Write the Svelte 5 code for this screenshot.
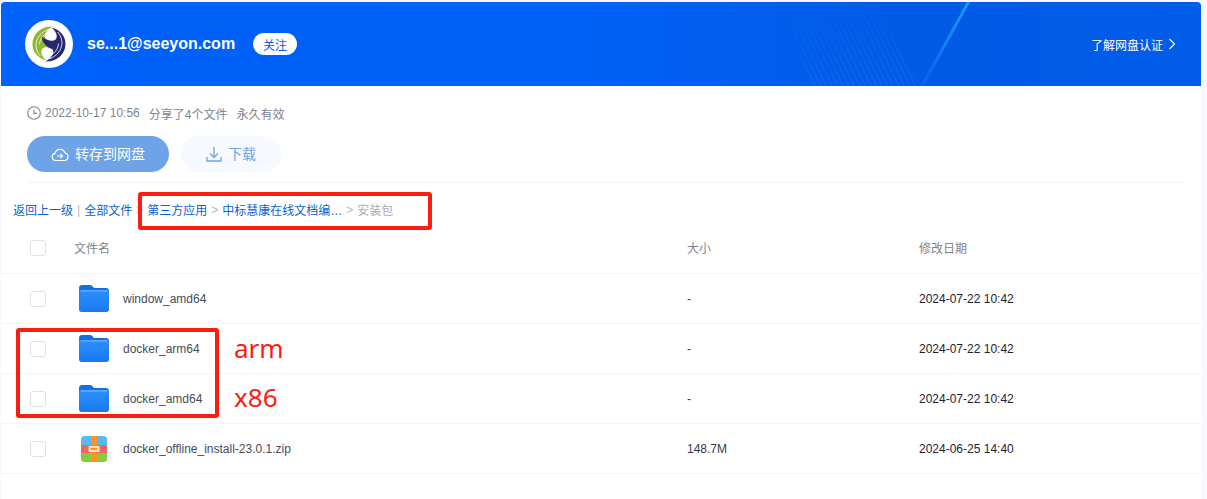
<script>
  const files = [
    { name: "window_amd64", type: "folder", size: "-", date: "2024-07-22 10:42" },
    { name: "docker_arm64", type: "folder", size: "-", date: "2024-07-22 10:42" },
    { name: "docker_amd64", type: "folder", size: "-", date: "2024-07-22 10:42" },
    { name: "docker_offline_install-23.0.1.zip", type: "zip", size: "148.7M", date: "2024-06-25 14:40" },
  ];
</script>

{#snippet swirl(fill)}
  <path d="M24 2.500C12 2 3.500 10 3.500 20c0 8 5 14 14 16.500C13 33 11 28 13 25c2-3 9-2 14 2 0-6-5-10-10-12-3-2-1-8 7-13z" fill={fill} />
  <path d="M20 5C12 8 7.500 13.500 7 21c0 4 1.500 8 4.500 11M21 7.500c-6 2.500-10 6.500-10.500 13" fill="none" stroke="#fff" stroke-width="0.800" />
{/snippet}

<div class="page">
  <div class="card">
    <header class="banner">
      <svg class="streak" width="280" height="84" viewBox="0 0 280 84">
        <defs>
          <pattern id="hatch" width="5" height="5" patternUnits="userSpaceOnUse" patternTransform="rotate(-26)">
            <rect width="2" height="5" fill="#2a84f5" />
          </pattern>
          <linearGradient id="fade" x1="0" y1="0" x2="0.4" y2="1">
            <stop offset="0" stop-color="#fff" stop-opacity="0" />
            <stop offset="1" stop-color="#fff" stop-opacity="0.22" />
          </linearGradient>
          <mask id="fademask"><rect width="280" height="84" fill="url(#fade)" /></mask>
          <linearGradient id="line" x1="1" y1="0" x2="0" y2="1">
            <stop offset="0" stop-color="#1ba0f8" />
            <stop offset="1" stop-color="#0a5cf0" />
          </linearGradient>
        </defs>
        <polygon points="80,0 176,0 220,84 110,84" fill="url(#hatch)" mask="url(#fademask)" />
        <polygon points="219,84 266,0 269,0 223,84" fill="url(#line)" />
      </svg>
      <div class="avatar">
        <svg width="40" height="40" viewBox="0 0 40 40">
          {@render swirl("#8fb82e")}
          <g transform="rotate(180 20 20)">
            {@render swirl("#26286f")}
          </g>
        </svg>
      </div>
      <span class="user">se...1@seeyon.com</span>
      <button class="follow">关注</button>
      <a class="verify" href="#verify">了解网盘认证
        <svg width="8" height="12" viewBox="0 0 8 12"><path d="M1.500 1l5 5-5 5" fill="none" stroke="#fff" stroke-width="1.100" /></svg>
      </a>
    </header>

    <section class="info">
      <div class="meta">
        <svg width="14" height="14" viewBox="0 0 14 14"><circle cx="7" cy="7" r="6.300" fill="none" stroke="#7d8290" stroke-width="1.100" /><path d="M7 3.400V7.400h3" fill="none" stroke="#7d8290" stroke-width="1.100" /></svg>
        <span class="time">2022-10-17 10:56</span>
        <span>分享了4个文件</span>
        <span>永久有效</span>
      </div>
      <div class="actions">
        <button class="save">
          <svg width="18" height="16" viewBox="0 0 18 16"><path d="M5 14.500H4.500A3.600 3.600 0 0 1 4 7.400 5.200 5.200 0 0 1 14 7a3.800 3.800 0 0 1-.5 7.500z" fill="none" stroke="#fff" stroke-width="1.200" /><path d="M6 10h5.500M9.500 8l2 2-2 2" fill="none" stroke="#fff" stroke-width="1.200" /></svg>
          <span>转存到网盘</span>
        </button>
        <button class="download">
          <svg width="16" height="16" viewBox="0 0 16 16"><path d="M8 1v10M4 7.500l4 4 4-4M1 11v4h14v-4" fill="none" stroke="#6ea3e8" stroke-width="1.300" /></svg>
          <span>下载</span>
        </button>
      </div>
    </section>

    <nav class="crumbs">
      <a href="#up">返回上一级</a><i class="bar">|</i><a href="#all">全部文件</a><i class="sep">&gt;</i>
      <a href="#third">第三方应用</a><i class="sep">&gt;</i>
      <a href="#zb">中标慧康在线文档编…</a><i class="sep">&gt;</i>
      <span class="here">安装包</span>
    </nav>

    <div class="row head">
      <span class="check"></span>
      <span class="name-col">文件名</span>
      <span class="size-col">大小</span>
      <span class="date-col">修改日期</span>
    </div>

    {#each files as file}
      <div class="row">
        <span class="check"></span>
        <span class="name-col">
          <span class="icon">
            {#if file.type === "folder"}
              <svg width="30" height="27" viewBox="0 0 31 28">
                <defs>
                  <linearGradient id="front" x1="0" y1="0" x2="0" y2="1">
                    <stop offset="0" stop-color="#2c8ffc" />
                    <stop offset="1" stop-color="#1a78f2" />
                  </linearGradient>
                </defs>
                <path d="M3 0h8c1.500 0 2.500.6 3.300 1.700L15.500 3H28c1.700 0 3 1.300 3 3v19c0 1.700-1.300 3-3 3H3c-1.700 0-3-1.300-3-3V3c0-1.700 1.300-3 3-3z" fill="#126fe6" />
                <path d="M2.500 5.500h26c1.300 0 2.500 1 2.500 2.500v17c0 1.700-1.300 3-3 3H3c-1.700 0-3-1.300-3-3V8c0-1.500 1.200-2.500 2.500-2.500z" fill="url(#front)" />
                <rect x="1.500" y="5.500" width="28" height="1.200" fill="#8cc2ff" opacity="0.8" />
              </svg>
            {:else}
              <svg width="26" height="26" viewBox="0 0 26 26">
                <defs><clipPath id="zipclip"><rect width="26" height="26" rx="3.500" /></clipPath></defs>
                <g clip-path="url(#zipclip)">
                  <rect width="26" height="9" fill="#5cb7f7" />
                  <rect y="9" width="26" height="8" fill="#ef6464" />
                  <rect y="17" width="26" height="9" fill="#84cc3c" />
                  <rect x="10" width="6" height="26" fill="#ff9326" />
                </g>
                <rect x="7.500" y="10" width="11" height="6" fill="#fbe3c4" />
                <rect x="9.500" y="12" width="7" height="2" fill="#ff9326" />
              </svg>
            {/if}
          </span>
          <span class="filename">{file.name}</span>
        </span>
        <span class="size-col value">{file.size}</span>
        <span class="date-col value">{file.date}</span>
      </div>
    {/each}
  </div>

  <div class="mark mark-crumb"></div>
  <div class="mark mark-rows"></div>
  <span class="note note-arm">arm</span>
  <span class="note note-x86">x86</span>
</div>

<style>
  :global(body) {
    margin: 0;
    background: #f7f9ff;
  }

  .page {
    position: relative;
    height: 499px;
    overflow: hidden;
    padding: 2px 6px 0 1px;
    box-sizing: border-box;
    font-family: "Liberation Sans", "Noto Sans CJK SC", sans-serif;
  }

  .card {
    background: #fff;
    height: 497px;
    border-radius: 4px 4px 0 0;
    overflow: hidden;
  }

  .banner {
    position: relative;
    display: flex;
    align-items: center;
    height: 84px;
    padding: 0 25px 0 24px;
    background: linear-gradient(90deg, #0061fb 0%, #0061f6 50%, #005ae6 75%, #015ce9 100%);
    color: #fff;
  }

  .streak {
    position: absolute;
    left: 700px;
    top: 0;
  }

  .avatar {
    position: relative;
    width: 48px;
    height: 48px;
    border-radius: 50%;
    background: #fff;
    display: flex;
    align-items: center;
    justify-content: center;
    margin-right: 14px;
  }

  .user {
    position: relative;
    font-size: 16px;
    font-weight: 700;
    margin-right: 18px;
  }

  .follow {
    position: relative;
    width: 44px;
    height: 22px;
    padding: 0;
    border: 0;
    border-radius: 11px;
    background: #fff;
    color: #0b5fe8;
    font: 12px "Noto Sans CJK SC", sans-serif;
  }

  .verify {
    position: relative;
    margin-left: auto;
    display: flex;
    align-items: center;
    gap: 5px;
    color: #fff;
    font-size: 12px;
    text-decoration: none;
  }

  .info {
    margin: 0 16px 0 26px;
    height: 97px;
    box-sizing: border-box;
    border-bottom: 1px solid #f2f3f6;
  }

  .meta {
    display: flex;
    align-items: center;
    gap: 9px;
    padding-top: 19px;
    height: 16px;
    font-size: 12px;
    color: #80838f;
  }

  .meta .time {
    margin-left: -5px;
  }

  .actions {
    display: flex;
    gap: 12px;
    margin-top: 15px;
  }

  .actions button {
    height: 36px;
    border: 0;
    border-radius: 18px;
    display: flex;
    align-items: center;
    justify-content: center;
    gap: 6px;
    padding: 0;
    font: 14px "Noto Sans CJK SC", sans-serif;
  }

  .actions button span {
    margin-bottom: 2px;
  }

  .save {
    width: 142px;
    background: #6ea3e8;
    color: #fff;
  }

  .download {
    width: 100px;
    background: #f6f9ff;
    color: #6ea3e8;
  }

  .crumbs {
    display: flex;
    align-items: center;
    height: 17px;
    margin-top: 18px;
    padding-left: 12px;
    font-size: 12px;
    white-space: nowrap;
  }

  .crumbs a {
    color: #0a5fd8;
    text-decoration: none;
  }

  .crumbs i {
    font-style: normal;
    color: #b4b7c0;
  }

  .bar {
    margin: 0 4px;
  }

  .sep {
    margin: 0 4px;
  }

  .here {
    color: #a9acb5;
  }

  .row {
    display: flex;
    align-items: center;
    height: 49px;
    border-bottom: 1px solid #f4f5f7;
    font-size: 12px;
  }

  .head {
    height: 51px;
    margin-top: 4px;
    color: #80838f;
  }

  .check {
    width: 14px;
    height: 14px;
    margin-left: 29px;
    border: 1px solid #dfe1e8;
    border-radius: 3px;
    flex: none;
  }

  .name-col {
    display: flex;
    align-items: center;
    width: 613px;
    margin-left: 28px;
  }

  .icon {
    display: flex;
    justify-content: center;
    width: 40px;
    margin: 0 9px 0 0;
  }

  .filename {
    color: #454d5a;
  }

  .size-col {
    width: 232px;
  }

  .value {
    color: #1c2230;
  }

  .size-col.value {
    color: #333a47;
  }

  .mark {
    position: absolute;
    box-sizing: border-box;
    border: 4px solid #fb1d12;
    border-radius: 3px;
  }

  .mark-crumb {
    left: 138px;
    top: 192px;
    width: 294px;
    height: 38px;
  }

  .mark-rows {
    left: 16px;
    top: 328px;
    width: 203px;
    height: 90px;
  }

  .note {
    position: absolute;
    left: 234px;
    color: #fb1d12;
    font: 26px "Noto Sans", sans-serif;
    line-height: 30px;
  }

  .note-arm {
    top: 333px;
  }

  .note-x86 {
    top: 382px;
  }
</style>
